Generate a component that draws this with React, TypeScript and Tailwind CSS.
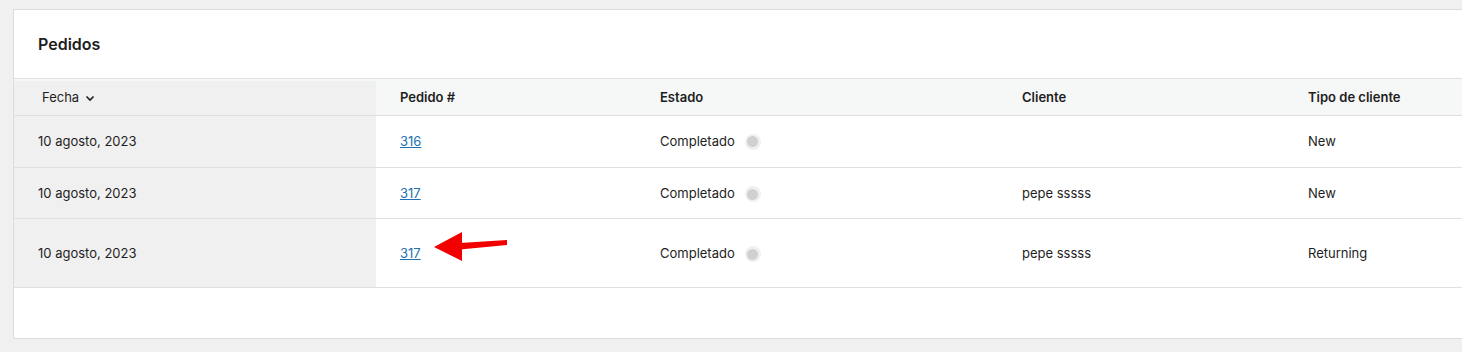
import React from "react";

const cols = "grid grid-cols-[362px_260px_362px_286px_1fr]";

type Row = { date: string; order: string; customer: string; type: string; h: string; pad: string; arrow?: boolean };

const rows: Row[] = [
  { date: "10 agosto, 2023", order: "316", customer: "", type: "New", h: "h-[52px]", pad: "pt-0" },
  { date: "10 agosto, 2023", order: "317", customer: "pepe sssss", type: "New", h: "h-[51px]", pad: "pt-[2px]" },
  { date: "10 agosto, 2023", order: "317", customer: "pepe sssss", type: "Returning", h: "h-[69px]", pad: "pt-[2px]", arrow: true },
];

function StatusDot() {
  return (
    <span className="ml-[10px] inline-flex h-[16px] w-[16px] items-center justify-center rounded-full bg-[#f0f0f0]">
      <span className="h-[11px] w-[11px] rounded-full bg-[#d0d0d0]" />
    </span>
  );
}

function RedArrow() {
  return (
    <svg className="absolute left-[56px] top-[11px]" width="76" height="32" viewBox="0 0 76 32">
      <polygon points="2,17 30,2 30,31" fill="#f20000" />
      <polygon points="28,13 75,10 75,15 28,19.5" fill="#f20000" />
    </svg>
  );
}

export default function App() {
  return (
    <div className="min-h-[352px] overflow-hidden bg-[#f0f0f0] pt-[9px] pl-[13px] text-[13px] text-[#1e1e1e] [font-family:Inter,'Liberation_Sans',sans-serif]">
      <div className="w-[1480px] border border-[#dcdcdc] bg-white">
        <div className="flex h-[69px] items-center border-b border-[#e0e0e0] pl-[24px]">
          <h2 className="text-[16px] font-semibold">Pedidos</h2>
        </div>

        <div className={`${cols} h-[37px] border-b border-[#e0e0e0] bg-[#f6f7f7] pt-[2px] font-semibold`}>
          <div className="flex items-center gap-[5px] bg-[#f0f0f0] pl-[28px] font-normal">
            Fecha
            <svg width="12" height="12" viewBox="0 0 12 12" fill="none" stroke="#1e1e1e" strokeWidth="1.6">
              <path d="M2.5 4.5 6 8l3.5-3.5" />
            </svg>
          </div>
          <div className="flex items-center pl-[24px]">Pedido #</div>
          <div className="flex items-center pl-[24px]">Estado</div>
          <div className="flex items-center pl-[24px]">Cliente</div>
          <div className="flex items-center pl-[24px]">Tipo de cliente</div>
        </div>

        {rows.map((r, i) => (
          <div key={i} className={`${cols} ${r.h} border-b border-[#e0e0e0]`}>
            <div className={`flex items-center bg-[#f0f0f0] pl-[24px] ${r.pad}`}>{r.date}</div>
            <div className={`relative flex items-center pl-[24px] ${r.pad}`}>
              <a href="#" className="text-[#2271b1] underline">{r.order}</a>
              {r.arrow && <RedArrow />}
            </div>
            <div className={`flex items-center pl-[24px] ${r.pad}`}>
              Completado
              <StatusDot />
            </div>
            <div className={`flex items-center pl-[24px] ${r.pad}`}>{r.customer}</div>
            <div className={`flex items-center pl-[24px] ${r.pad}`}>{r.type}</div>
          </div>
        ))}

        <div className="h-[50px]" />
      </div>
    </div>
  );
}
